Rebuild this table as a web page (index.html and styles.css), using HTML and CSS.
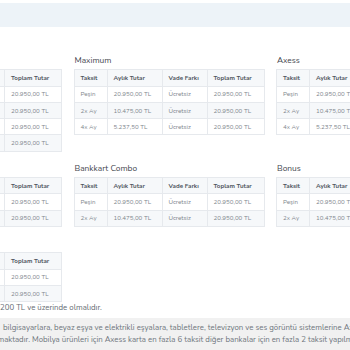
FILE: index.html
```html
<!DOCTYPE html>
<html lang="tr">
<head>
<meta charset="utf-8">
<title>Taksit Seçenekleri</title>
<link rel="stylesheet" href="styles.css">
</head>
<body>
<div class="topbar"></div>
<div class="page">
  <div class="content">
    <div class="grid">
      <section class="card">
        <h3 class="card-title">World</h3>
        <table class="tbl">
          <colgroup><col class="c1"><col class="c2"><col class="c3"><col class="c4"></colgroup>
          <thead><tr><th>Taksit</th><th>Aylık Tutar</th><th>Vade Farkı</th><th>Toplam Tutar</th></tr></thead>
          <tbody>
            <tr><td>Peşin</td><td>20.950,00 TL</td><td>Ücretsiz</td><td>20.950,00 TL</td></tr>
            <tr><td>2x Ay</td><td>10.475,00 TL</td><td>Ücretsiz</td><td>20.950,00 TL</td></tr>
            <tr><td>3x Ay</td><td>6.983,33 TL</td><td>Ücretsiz</td><td>20.950,00 TL</td></tr>
            <tr><td>4x Ay</td><td>5.237,50 TL</td><td>Ücretsiz</td><td>20.950,00 TL</td></tr>
          </tbody>
        </table>
      </section>
      <section class="card">
        <h3 class="card-title">Maximum</h3>
        <table class="tbl">
          <colgroup><col class="c1"><col class="c2"><col class="c3"><col class="c4"></colgroup>
          <thead><tr><th>Taksit</th><th>Aylık Tutar</th><th>Vade Farkı</th><th>Toplam Tutar</th></tr></thead>
          <tbody>
            <tr><td>Peşin</td><td>20.950,00 TL</td><td>Ücretsiz</td><td>20.950,00 TL</td></tr>
            <tr><td>2x Ay</td><td>10.475,00 TL</td><td>Ücretsiz</td><td>20.950,00 TL</td></tr>
            <tr><td>4x Ay</td><td>5.237,50 TL</td><td>Ücretsiz</td><td>20.950,00 TL</td></tr>
          </tbody>
        </table>
      </section>
      <section class="card">
        <h3 class="card-title">Axess</h3>
        <table class="tbl">
          <colgroup><col class="c1"><col class="c2"><col class="c3"><col class="c4"></colgroup>
          <thead><tr><th>Taksit</th><th>Aylık Tutar</th><th>Vade Farkı</th><th>Toplam Tutar</th></tr></thead>
          <tbody>
            <tr><td>Peşin</td><td>20.950,00 TL</td><td>Ücretsiz</td><td>20.950,00 TL</td></tr>
            <tr><td>2x Ay</td><td>10.475,00 TL</td><td>Ücretsiz</td><td>20.950,00 TL</td></tr>
            <tr><td>4x Ay</td><td>5.237,50 TL</td><td>Ücretsiz</td><td>20.950,00 TL</td></tr>
          </tbody>
        </table>
      </section>
      <section class="card">
        <h3 class="card-title">Paraf</h3>
        <table class="tbl">
          <colgroup><col class="c1"><col class="c2"><col class="c3"><col class="c4"></colgroup>
          <thead><tr><th>Taksit</th><th>Aylık Tutar</th><th>Vade Farkı</th><th>Toplam Tutar</th></tr></thead>
          <tbody>
            <tr><td>Peşin</td><td>20.950,00 TL</td><td>Ücretsiz</td><td>20.950,00 TL</td></tr>
            <tr><td>2x Ay</td><td>10.475,00 TL</td><td>Ücretsiz</td><td>20.950,00 TL</td></tr>
          </tbody>
        </table>
      </section>
      <section class="card">
        <h3 class="card-title">Bankkart Combo</h3>
        <table class="tbl">
          <colgroup><col class="c1"><col class="c2"><col class="c3"><col class="c4"></colgroup>
          <thead><tr><th>Taksit</th><th>Aylık Tutar</th><th>Vade Farkı</th><th>Toplam Tutar</th></tr></thead>
          <tbody>
            <tr><td>Peşin</td><td>20.950,00 TL</td><td>Ücretsiz</td><td>20.950,00 TL</td></tr>
            <tr><td>2x Ay</td><td>10.475,00 TL</td><td>Ücretsiz</td><td>20.950,00 TL</td></tr>
          </tbody>
        </table>
      </section>
      <section class="card">
        <h3 class="card-title">Bonus</h3>
        <table class="tbl">
          <colgroup><col class="c1"><col class="c2"><col class="c3"><col class="c4"></colgroup>
          <thead><tr><th>Taksit</th><th>Aylık Tutar</th><th>Vade Farkı</th><th>Toplam Tutar</th></tr></thead>
          <tbody>
            <tr><td>Peşin</td><td>20.950,00 TL</td><td>Ücretsiz</td><td>20.950,00 TL</td></tr>
            <tr><td>2x Ay</td><td>10.475,00 TL</td><td>Ücretsiz</td><td>20.950,00 TL</td></tr>
          </tbody>
        </table>
      </section>
      <section class="card">
        <h3 class="card-title">Diğer Kartlar</h3>
        <table class="tbl">
          <colgroup><col class="c1"><col class="c2"><col class="c3"><col class="c4"></colgroup>
          <thead><tr><th>Taksit</th><th>Aylık Tutar</th><th>Vade Farkı</th><th>Toplam Tutar</th></tr></thead>
          <tbody>
            <tr><td>Peşin</td><td>20.950,00 TL</td><td>Ücretsiz</td><td>20.950,00 TL</td></tr>
            <tr><td>2x Ay</td><td>10.475,00 TL</td><td>Ücretsiz</td><td>20.950,00 TL</td></tr>
          </tbody>
        </table>
      </section>
    </div>

    <p class="line cond"><span class="cut"><span class="cut-in">Taksitli alışveriş için tutar</span></span><span class="vis">200 TL ve üzerinde olmalıdır.</span></p>

    <div class="notice">
      <p class="line"><span class="cut"><span class="cut-in">Yasal düzenleme gereği</span></span><span class="vis vis-sp">bilgisayarlara, beyaz eşya ve elektrikli eşyalara, tabletlere, televizyon ve ses görüntü sistemlerine Axess karta en fazla 6 taksit, diğer bankalara en fazla 3 taksit uygula</span></p>
      <p class="line"><span class="cut"><span class="cut-in">taksit uygulan</span></span><span class="vis vis-m">maktadır. Mobilya ürünleri için Axess karta en fazla 6 taksit diğer bankalar için en fazla 2 taksit yapılmaktadır.</span></p>
    </div>
  </div>
</div>
</body>
</html>
```

FILE: styles.css
```css
* { box-sizing: border-box; }

html, body {
  margin: 0;
  padding: 0;
  background: #ffffff;
  overflow: hidden;
}

body {
  font-family: "Nunito", Lato, "Noto Sans", sans-serif;
  color: #737a82;
}

.topbar {
  margin-top: 3px;
  height: 24px;
  background: #edf3f8;
}

.page {
  width: 350px;
  overflow: hidden;
}

.content {
  width: 620px;
  margin-left: -129px;
  padding-top: 28px;
}

.grid {
  display: grid;
  grid-template-columns: repeat(3, 190px);
  column-gap: 12.5px;
  row-gap: 11px;
  align-items: start;
}

.card-title {
  margin: 0 0 2.3px;
  padding-left: 1px;
  font-size: 8.4px;
  line-height: 12px;
  font-weight: 400;
  color: #3f464e;
}

.tbl {
  width: 190px;
  table-layout: fixed;
  border-collapse: collapse;
  font-size: 6.2px;
  border: 1px solid #e6e9ed;
}

.c1 { width: 33px; }
.c2 { width: 55px; }
.c3 { width: 45px; }
.c4 { width: 57px; }

.tbl th,
.tbl td {
  height: 16.3px;
  padding: 0 6px;
  text-align: left;
  vertical-align: middle;
  white-space: nowrap;
  overflow: hidden;
  border: 1px solid #e6e9ed;
}

.tbl th {
  font-weight: 700;
  color: #4d545c;
  background: #f6f8fa;
}

.tbl td {
  color: #80868d;
  background: #ffffff;
}

.tbl tbody tr:nth-child(even) td {
  background: #f6f8fa;
}

.line {
  display: flex;
  margin: 0;
  white-space: nowrap;
  font-size: 7.85px;
}

.cut {
  flex: 0 0 129px;
  overflow: hidden;
  direction: rtl;
  text-align: right;
}

.cut-in {
  direction: ltr;
  unicode-bidi: isolate;
}

.vis { flex: none; }
.vis-sp { padding-left: 3px; }
.vis-m { margin-left: -2.5px; }

.cond {
  line-height: 11px;
  color: #666d74;
}

.notice {
  margin-top: 5px;
  padding: 3.5px 0 2.5px;
  background: #f1f1f1;
}

.notice .line {
  line-height: 12.7px;
  color: #6f767d;
}
```
